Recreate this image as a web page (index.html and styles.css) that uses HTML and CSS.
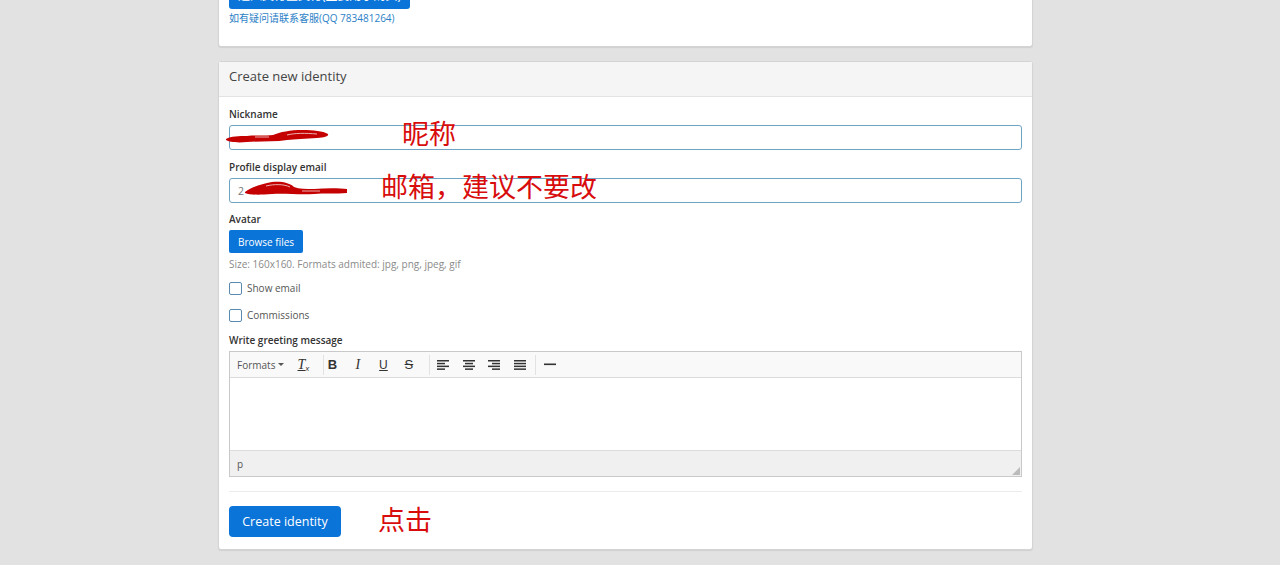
FILE: index.html
```html
<!DOCTYPE html>
<html lang="zh">
<head>
<meta charset="utf-8">
<title>Create new identity</title>
<link rel="stylesheet" href="styles.css">
</head>
<body>
<div class="page">
  <div class="panel panel-top">
    <div class="panel-body top-body">
      <button class="btn btn-primary btn-pay">进入支付宝支付(主要用于购买)</button>
      <a class="help-link" href="#">如有疑问请联系客服(QQ 783481264)</a>
    </div>
  </div>

  <div class="panel">
    <div class="panel-heading">Create new identity</div>
    <div class="panel-body">
      <div class="form-group">
        <label class="label">Nickname</label>
        <div class="field">
          <input class="input" type="text" value="">
          <svg class="scribble scribble-nick" width="106" height="18" viewBox="0 0 106 18">
            <path d="M1 12 C 6 9, 14 9, 22 9 C 30 8, 40 9, 48 8 C 55 5, 65 3, 78 3 C 88 3, 98 4, 103 7 C 104 9, 100 11, 92 11 C 80 12, 70 12, 62 13 C 50 15, 35 14, 22 15 C 12 16, 4 15, 1 13 Z" fill="#c40000"/>
            <path d="M30 10 L44 10 M62 8 C 70 6, 80 6, 92 7" stroke="#f0c4c4" stroke-width="0.9" fill="none"/>
          </svg>
          <span class="note note-nick">昵称</span>
        </div>
      </div>
      <div class="form-group fg-mail">
        <label class="label">Profile display email</label>
        <div class="field">
          <input class="input input-email" type="text" value="2">
          <svg class="scribble scribble-mail" width="106" height="18" viewBox="0 0 106 18">
            <path d="M1 12 C 6 8, 16 4, 28 2 C 38 1, 46 3, 50 7 C 55 9, 62 9, 70 9 C 82 8, 95 8, 103 9 L 103 13 C 92 14, 80 13, 70 14 C 55 15, 40 13, 28 14 C 15 15, 6 15, 1 13 Z" fill="#c40000"/>
            <path d="M22 6 C 30 4, 40 4, 46 7 M58 11 L76 11" stroke="#f0c4c4" stroke-width="0.9" fill="none"/>
          </svg>
          <span class="note note-mail">邮箱，建议不要改</span>
        </div>
      </div>
      <div class="form-group">
        <label class="label">Avatar</label>
        <button class="btn btn-primary btn-browse">Browse files</button>
        <p class="help">Size: 160x160. Formats admited: jpg, png, jpeg, gif</p>
      </div>
      <label class="check check-first"><span class="box"></span>Show email</label>
      <label class="check"><span class="box"></span>Commissions</label>
      <div class="form-group">
        <label class="label">Write greeting message</label>
        <div class="editor">
          <div class="toolbar">
            <div class="tb-group g1">
              <span class="tb-formats">Formats <span class="caret"></span></span>
              <span class="tb-btn tb-clear"><span class="tx">T</span><span class="tx-x">x</span></span>
            </div>
            <div class="tb-group g2">
              <span class="tb-btn tb-b">B</span>
              <span class="tb-btn tb-i">I</span>
              <span class="tb-btn tb-u">U</span>
              <span class="tb-btn tb-s">S</span>
            </div>
            <div class="tb-group g3">
              <span class="tb-btn"><svg width="12" height="10" viewBox="0 0 12 10"><g fill="#333"><rect x="0" y="0" width="12" height="1.5"/><rect x="0" y="2.8" width="8" height="1.5"/><rect x="0" y="5.6" width="12" height="1.5"/><rect x="0" y="8.4" width="8" height="1.5"/></g></svg></span>
              <span class="tb-btn"><svg width="12" height="10" viewBox="0 0 12 10"><g fill="#333"><rect x="0" y="0" width="12" height="1.5"/><rect x="2" y="2.8" width="8" height="1.5"/><rect x="0" y="5.6" width="12" height="1.5"/><rect x="2" y="8.4" width="8" height="1.5"/></g></svg></span>
              <span class="tb-btn"><svg width="12" height="10" viewBox="0 0 12 10"><g fill="#333"><rect x="0" y="0" width="12" height="1.5"/><rect x="4" y="2.8" width="8" height="1.5"/><rect x="0" y="5.6" width="12" height="1.5"/><rect x="4" y="8.4" width="8" height="1.5"/></g></svg></span>
              <span class="tb-btn"><svg width="12" height="10" viewBox="0 0 12 10"><g fill="#333"><rect x="0" y="0" width="12" height="1.5"/><rect x="0" y="2.8" width="12" height="1.5"/><rect x="0" y="5.6" width="12" height="1.5"/><rect x="0" y="8.4" width="12" height="1.5"/></g></svg></span>
            </div>
            <div class="tb-group g4">
              <span class="tb-btn"><svg width="12" height="3" viewBox="0 0 12 3"><rect x="0" y="0.5" width="12" height="1.6" fill="#333"/></svg></span>
            </div>
          </div>
          <div class="edit-area"></div>
          <div class="statusbar">
            <span>p</span>
            <svg class="resize" width="8" height="8" viewBox="0 0 8 8"><path d="M8 0 L8 8 L0 8 Z" fill="#bbb"/></svg>
          </div>
        </div>
      </div>
      <div class="actions">
        <button class="btn btn-primary btn-create">Create identity</button>
        <span class="note note-click">点击</span>
      </div>
    </div>
  </div>
</div>
</body>
</html>
```

FILE: styles.css
```css
* { box-sizing: border-box; }
html, body { margin: 0; padding: 0; }
body {
  background: #e2e2e2;
  font-family: "Open Sans", "Noto Sans CJK SC", sans-serif;
  font-size: 10px;
  color: #333;
  height: 565px;
  overflow: hidden;
}
.page {
  width: 815px;
  margin-left: 218px;
  margin-top: -30px;
}
.panel {
  background: #fff;
  border: 1px solid #d4d4d4;
  border-radius: 3px;
  box-shadow: 0 1px 1px rgba(0,0,0,0.08);
  margin-bottom: 14px;
}
.panel-top { border-top: none; }
.panel-heading {
  background: #f5f5f5;
  border-bottom: 1px solid #e3e3e3;
  padding: 5px 10px 0;
  height: 35px;
  font-size: 13px;
  color: #444;
  line-height: 18px;
}
.panel-body { padding: 10px 10px 12px; }
.panel-body.top-body { padding: 10px 10px 21px; display: flex; flex-direction: column; align-items: flex-start; }
.btn {
  font-family: "Open Sans", "Noto Sans CJK SC", sans-serif;
  border: none;
  color: #fff;
  cursor: pointer;
}
.btn-primary { background: #0b74d8; }
.btn-pay {
  height: 29px;
  width: 181px;
  border-radius: 3px;
  font-size: 12px;
  padding: 0;
  white-space: nowrap;
  overflow: hidden;
}
.help-link {
  color: #2b7fc7;
  text-decoration: none;
  font-size: 10px;
  margin-top: 2px;
  line-height: 14px;
}
.form-group { margin-bottom: 10px; }
.fg-mail { margin-bottom: 9px; }
.label {
  display: block;
  font-weight: 600;
  font-size: 10px;
  line-height: 14px;
  margin: 0 0 4px;
  color: #333;
}
.field { position: relative; }
.input {
  display: block;
  width: 100%;
  height: 25px;
  border: 1px solid #6fa3c4;
  border-radius: 3px;
  padding: 0 8px;
  font-family: "Open Sans", sans-serif;
  font-size: 10.5px;
  color: #777;
  background: #fff;
  outline: none;
}
.scribble { position: absolute; }
.scribble-nick { left: -4px; top: 2px; }
.scribble-mail { left: 15px; top: 2px; }
.note {
  position: absolute;
  font-family: "Noto Sans CJK SC", sans-serif;
  color: #d80c0c;
  font-size: 27px;
  line-height: 27px;
}
.note-nick { left: 173px; top: -6px; }
.note-mail { left: 152px; top: -6px; }
.btn-browse {
  height: 23px;
  padding: 0 9px;
  border-radius: 2px;
  font-size: 10px;
  display: block;
}
.help { margin: 4px 0 0; color: #8a8a8a; font-size: 10px; line-height: 14px; }
.check {
  display: flex;
  align-items: center;
  gap: 5px;
  font-size: 10px;
  color: #555;
  line-height: 14px;
  margin-bottom: 11px;
}
.check-first { margin-bottom: 13px; }
.box {
  width: 13px;
  height: 13px;
  border: 1px solid #5a8ab0;
  border-radius: 2px;
  background: #fff;
}
.editor { border: 1px solid #c9c9c9; }
.toolbar {
  height: 26px;
  background: #f9f9f9;
  border-bottom: 1px solid #dcdcdc;
  display: flex;
  align-items: center;
}
.tb-group {
  display: flex;
  align-items: center;
  height: 20px;
  border-right: 1px solid #e2e2e2;
}
.g1 { padding: 0 12px 0 7px; }
.g2 { padding: 0 12px 0 0; gap: 9.5px; }
.g3 { padding: 0 7px 0 5px; gap: 9.7px; }
.g4 { padding: 0 0 0 6px; border-right: none; }
.tb-formats { font-size: 10px; color: #555; margin-right: 11px; display: flex; align-items: center; gap: 3px; }
.caret { width: 0; height: 0; border-left: 3px solid transparent; border-right: 3px solid transparent; border-top: 3px solid #555; }
.tb-btn {
  width: 16px;
  height: 20px;
  display: flex;
  align-items: center;
  justify-content: center;
  font-size: 13px;
  color: #333;
  font-family: "Liberation Sans", sans-serif;
}
.tb-clear { font-style: italic; }
.tx { text-decoration: underline; font-family: "Liberation Serif", serif; font-size: 14px; }
.tx-x { font-size: 8px; margin-top: 8px; }
.tb-b { font-weight: 700; }
.tb-i { font-style: italic; font-family: "Liberation Serif", serif; font-size: 14px; }
.tb-u { text-decoration: underline; font-size: 12px; }
.tb-s { text-decoration: line-through; font-size: 13px; }
.edit-area { height: 72px; background: #fff; }
.statusbar {
  height: 26px;
  background: #f0f0f0;
  border-top: 1px solid #dcdcdc;
  display: flex;
  align-items: center;
  justify-content: space-between;
  padding: 0 0 0 7px;
  font-size: 10px;
  color: #555;
}
.resize { align-self: flex-end; margin: 0 1px 1px 0; }
.actions {
  border-top: 1px solid #ececec;
  margin-top: 14px;
  padding-top: 14px;
  position: relative;
  display: flex;
  align-items: center;
}
.btn-create {
  height: 31px;
  width: 112px;
  border-radius: 4px;
  font-size: 12.5px;
}
.note-click { position: absolute; left: 149px; top: 13px; }
```
